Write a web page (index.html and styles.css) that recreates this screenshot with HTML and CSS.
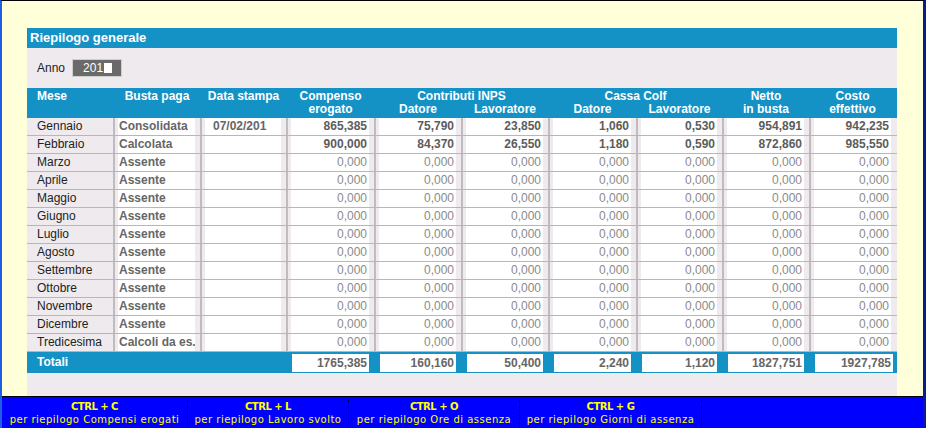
FILE: index.html
```html
<!DOCTYPE html>
<html lang="it">
<head>
<meta charset="utf-8">
<title>Riepilogo generale</title>
<link rel="stylesheet" href="styles.css">
</head>
<body>
<div class="window">
  <div class="desk">
    <section class="panel">
      <div class="title">Riepilogo generale</div>
      <div class="anno">
        <span class="anno-label">Anno</span>
        <span class="field">201<span class="caret"></span></span>
      </div>

      <div class="grid head">
        <div class="h h-left c1">Mese</div>
        <div class="h c2">Busta paga</div>
        <div class="h c3">Data stampa</div>
        <div class="h c4">Compenso</div>
        <div class="h c4 r2">erogato</div>
        <div class="h c56">Contributi INPS</div>
        <div class="h c5 r2">Datore</div>
        <div class="h c6 r2">Lavoratore</div>
        <div class="h c78">Cassa Colf</div>
        <div class="h c7 r2">Datore</div>
        <div class="h c8 r2">Lavoratore</div>
        <div class="h c9">Netto</div>
        <div class="h c9 r2">in busta</div>
        <div class="h c10">Costo</div>
        <div class="h c10 r2">effettivo</div>
      </div>

      <div class="grid row">
        <div class="cell mese">Gennaio</div>
        <div class="cell"><div class="box txt">Consolidata</div></div>
        <div class="cell"><div class="box date">07/02/201</div></div>
        <div class="cell"><div class="box num">865,385</div></div>
        <div class="cell"><div class="box num">75,790</div></div>
        <div class="cell"><div class="box num">23,850</div></div>
        <div class="cell"><div class="box num">1,060</div></div>
        <div class="cell"><div class="box num">0,530</div></div>
        <div class="cell"><div class="box num">954,891</div></div>
        <div class="cell last"><div class="box num">942,235</div></div>
      </div>
      <div class="grid row">
        <div class="cell mese">Febbraio</div>
        <div class="cell"><div class="box txt">Calcolata</div></div>
        <div class="cell"><div class="box date"></div></div>
        <div class="cell"><div class="box num">900,000</div></div>
        <div class="cell"><div class="box num">84,370</div></div>
        <div class="cell"><div class="box num">26,550</div></div>
        <div class="cell"><div class="box num">1,180</div></div>
        <div class="cell"><div class="box num">0,590</div></div>
        <div class="cell"><div class="box num">872,860</div></div>
        <div class="cell last"><div class="box num">985,550</div></div>
      </div>
      <div class="grid row">
        <div class="cell mese">Marzo</div>
        <div class="cell"><div class="box txt">Assente</div></div>
        <div class="cell"><div class="box date"></div></div>
        <div class="cell"><div class="box num zero">0,000</div></div>
        <div class="cell"><div class="box num zero">0,000</div></div>
        <div class="cell"><div class="box num zero">0,000</div></div>
        <div class="cell"><div class="box num zero">0,000</div></div>
        <div class="cell"><div class="box num zero">0,000</div></div>
        <div class="cell"><div class="box num zero">0,000</div></div>
        <div class="cell last"><div class="box num zero">0,000</div></div>
      </div>
      <div class="grid row">
        <div class="cell mese">Aprile</div>
        <div class="cell"><div class="box txt">Assente</div></div>
        <div class="cell"><div class="box date"></div></div>
        <div class="cell"><div class="box num zero">0,000</div></div>
        <div class="cell"><div class="box num zero">0,000</div></div>
        <div class="cell"><div class="box num zero">0,000</div></div>
        <div class="cell"><div class="box num zero">0,000</div></div>
        <div class="cell"><div class="box num zero">0,000</div></div>
        <div class="cell"><div class="box num zero">0,000</div></div>
        <div class="cell last"><div class="box num zero">0,000</div></div>
      </div>
      <div class="grid row">
        <div class="cell mese">Maggio</div>
        <div class="cell"><div class="box txt">Assente</div></div>
        <div class="cell"><div class="box date"></div></div>
        <div class="cell"><div class="box num zero">0,000</div></div>
        <div class="cell"><div class="box num zero">0,000</div></div>
        <div class="cell"><div class="box num zero">0,000</div></div>
        <div class="cell"><div class="box num zero">0,000</div></div>
        <div class="cell"><div class="box num zero">0,000</div></div>
        <div class="cell"><div class="box num zero">0,000</div></div>
        <div class="cell last"><div class="box num zero">0,000</div></div>
      </div>
      <div class="grid row">
        <div class="cell mese">Giugno</div>
        <div class="cell"><div class="box txt">Assente</div></div>
        <div class="cell"><div class="box date"></div></div>
        <div class="cell"><div class="box num zero">0,000</div></div>
        <div class="cell"><div class="box num zero">0,000</div></div>
        <div class="cell"><div class="box num zero">0,000</div></div>
        <div class="cell"><div class="box num zero">0,000</div></div>
        <div class="cell"><div class="box num zero">0,000</div></div>
        <div class="cell"><div class="box num zero">0,000</div></div>
        <div class="cell last"><div class="box num zero">0,000</div></div>
      </div>
      <div class="grid row">
        <div class="cell mese">Luglio</div>
        <div class="cell"><div class="box txt">Assente</div></div>
        <div class="cell"><div class="box date"></div></div>
        <div class="cell"><div class="box num zero">0,000</div></div>
        <div class="cell"><div class="box num zero">0,000</div></div>
        <div class="cell"><div class="box num zero">0,000</div></div>
        <div class="cell"><div class="box num zero">0,000</div></div>
        <div class="cell"><div class="box num zero">0,000</div></div>
        <div class="cell"><div class="box num zero">0,000</div></div>
        <div class="cell last"><div class="box num zero">0,000</div></div>
      </div>
      <div class="grid row">
        <div class="cell mese">Agosto</div>
        <div class="cell"><div class="box txt">Assente</div></div>
        <div class="cell"><div class="box date"></div></div>
        <div class="cell"><div class="box num zero">0,000</div></div>
        <div class="cell"><div class="box num zero">0,000</div></div>
        <div class="cell"><div class="box num zero">0,000</div></div>
        <div class="cell"><div class="box num zero">0,000</div></div>
        <div class="cell"><div class="box num zero">0,000</div></div>
        <div class="cell"><div class="box num zero">0,000</div></div>
        <div class="cell last"><div class="box num zero">0,000</div></div>
      </div>
      <div class="grid row">
        <div class="cell mese">Settembre</div>
        <div class="cell"><div class="box txt">Assente</div></div>
        <div class="cell"><div class="box date"></div></div>
        <div class="cell"><div class="box num zero">0,000</div></div>
        <div class="cell"><div class="box num zero">0,000</div></div>
        <div class="cell"><div class="box num zero">0,000</div></div>
        <div class="cell"><div class="box num zero">0,000</div></div>
        <div class="cell"><div class="box num zero">0,000</div></div>
        <div class="cell"><div class="box num zero">0,000</div></div>
        <div class="cell last"><div class="box num zero">0,000</div></div>
      </div>
      <div class="grid row">
        <div class="cell mese">Ottobre</div>
        <div class="cell"><div class="box txt">Assente</div></div>
        <div class="cell"><div class="box date"></div></div>
        <div class="cell"><div class="box num zero">0,000</div></div>
        <div class="cell"><div class="box num zero">0,000</div></div>
        <div class="cell"><div class="box num zero">0,000</div></div>
        <div class="cell"><div class="box num zero">0,000</div></div>
        <div class="cell"><div class="box num zero">0,000</div></div>
        <div class="cell"><div class="box num zero">0,000</div></div>
        <div class="cell last"><div class="box num zero">0,000</div></div>
      </div>
      <div class="grid row">
        <div class="cell mese">Novembre</div>
        <div class="cell"><div class="box txt">Assente</div></div>
        <div class="cell"><div class="box date"></div></div>
        <div class="cell"><div class="box num zero">0,000</div></div>
        <div class="cell"><div class="box num zero">0,000</div></div>
        <div class="cell"><div class="box num zero">0,000</div></div>
        <div class="cell"><div class="box num zero">0,000</div></div>
        <div class="cell"><div class="box num zero">0,000</div></div>
        <div class="cell"><div class="box num zero">0,000</div></div>
        <div class="cell last"><div class="box num zero">0,000</div></div>
      </div>
      <div class="grid row">
        <div class="cell mese">Dicembre</div>
        <div class="cell"><div class="box txt">Assente</div></div>
        <div class="cell"><div class="box date"></div></div>
        <div class="cell"><div class="box num zero">0,000</div></div>
        <div class="cell"><div class="box num zero">0,000</div></div>
        <div class="cell"><div class="box num zero">0,000</div></div>
        <div class="cell"><div class="box num zero">0,000</div></div>
        <div class="cell"><div class="box num zero">0,000</div></div>
        <div class="cell"><div class="box num zero">0,000</div></div>
        <div class="cell last"><div class="box num zero">0,000</div></div>
      </div>
      <div class="grid row">
        <div class="cell mese">Tredicesima</div>
        <div class="cell"><div class="box txt">Calcoli da es.</div></div>
        <div class="cell"><div class="box date"></div></div>
        <div class="cell"><div class="box num zero">0,000</div></div>
        <div class="cell"><div class="box num zero">0,000</div></div>
        <div class="cell"><div class="box num zero">0,000</div></div>
        <div class="cell"><div class="box num zero">0,000</div></div>
        <div class="cell"><div class="box num zero">0,000</div></div>
        <div class="cell"><div class="box num zero">0,000</div></div>
        <div class="cell last"><div class="box num zero">0,000</div></div>
      </div>

      <div class="grid totals">
        <div class="tot-label">Totali</div>
        <div class="tcell"><div class="tbox">1765,385</div></div>
        <div class="tcell"><div class="tbox">160,160</div></div>
        <div class="tcell"><div class="tbox">50,400</div></div>
        <div class="tcell"><div class="tbox">2,240</div></div>
        <div class="tcell"><div class="tbox">1,120</div></div>
        <div class="tcell"><div class="tbox">1827,751</div></div>
        <div class="tcell tlast"><div class="tbox">1927,785</div></div>
      </div>
    </section>
  </div>

  <footer class="keys">
    <div class="key k1"><b>CTRL + C</b><span>per riepilogo Compensi erogati</span></div>
    <div class="key k2"><b>CTRL + L</b><span>per riepilogo Lavoro svolto</span></div>
    <div class="key k3"><b>CTRL + O</b><span>per riepilogo Ore di assenza</span></div>
    <div class="key k4"><b>CTRL + G</b><span>per riepilogo Giorni di assenza</span></div>
  </footer>
</div>
</body>
</html>
```

FILE: styles.css
```css
* { box-sizing: border-box; }

html, body {
  margin: 0;
  padding: 0;
  background: #ffffda;
}

body {
  font-family: "Liberation Sans", Arial, sans-serif;
  font-size: 12px;
  color: #222;
}

.window {
  width: 926px;
  height: 428px;
  display: flex;
  flex-direction: column;
  border-top: 1px solid #000;
  border-left: 2px solid #1d5fe4;
  border-right: 3px solid #0b1d8e;
  overflow: hidden;
}

.desk {
  flex: 1;
  display: flex;
  background: #ffffda;
  padding: 27px 0 0 25px;
}

.panel {
  width: 870px;
  background: #eeeaee;
  display: flex;
  flex-direction: column;
}

.title {
  height: 20px;
  line-height: 20px;
  background: #1492c6;
  color: #fff;
  font-weight: bold;
  font-size: 13px;
  padding-left: 3px;
}

.anno {
  height: 40px;
  display: flex;
  align-items: center;
  padding-left: 10px;
  gap: 7px;
  color: #222;
}

.field {
  width: 50px;
  height: 18px;
  border: 1px solid #cfcfcf;
  background: #6a6a6a;
  color: #fff;
  line-height: 16px;
  padding-left: 10px;
  display: flex;
  align-items: center;
}

.caret {
  display: inline-block;
  width: 8px;
  height: 10px;
  background: #fff;
  margin-left: 1px;
}

.grid {
  display: grid;
  grid-template-columns: 88px 87px 86px 88px 87px 87px 88px 86px 87px 86px;
}

/* header */
.head {
  height: 30px;
  background: #1492c6;
  padding-top: 2px;
  grid-template-rows: 13px 13px;
}

.h {
  color: #fff;
  font-weight: bold;
  line-height: 13px;
  text-align: center;
  padding-right: 3px;
  white-space: nowrap;
  grid-row: 1;
}

.h-left { text-align: left; padding-left: 10px; }
.r2 { grid-row: 2; }
.c1 { grid-column: 1; }
.c2 { grid-column: 2; }
.c3 { grid-column: 3; }
.c4 { grid-column: 4; }
.c5 { grid-column: 5; }
.c6 { grid-column: 6; }
.c56 { grid-column: 5 / span 2; }
.c7 { grid-column: 7; }
.c8 { grid-column: 8; }
.c78 { grid-column: 7 / span 2; }
.c9 { grid-column: 9; }
.c10 { grid-column: 10; }

/* body rows */
.row {
  height: 18px;
  border-bottom: 1px solid #b9b5b9;
}

.cell {
  border-right: 2px solid #bfbbbf;
  padding: 0 5px 0 3px;
  height: 17px;
}

.cell.last {
  border-right: none;
  padding-right: 6px;
}

.mese {
  padding-left: 10px;
  line-height: 17px;
  color: #222;
  white-space: nowrap;
}

.box {
  background: #fff;
  height: 17px;
  line-height: 17px;
  white-space: nowrap;
  overflow: hidden;
}

.txt {
  font-weight: bold;
  color: #666;
  padding-left: 1px;
}

.date {
  font-weight: bold;
  color: #666;
  padding-left: 8px;
}

.num {
  text-align: right;
  padding-right: 2px;
  font-weight: bold;
  color: #5c5c5c;
}

.num.zero {
  font-weight: normal;
  color: #8a8a8a;
}

/* totals */
.totals {
  height: 21px;
  background: #1492c6;
}

.tot-label {
  grid-column: 1 / span 3;
  color: #fff;
  font-weight: bold;
  line-height: 21px;
  padding-left: 10px;
}

.tcell {
  padding: 2px 7px 1px 4px;
}

.tcell.tlast {
  padding-right: 4px;
}

.tbox {
  background: #fff;
  height: 18px;
  line-height: 18px;
  text-align: right;
  padding-right: 2px;
  font-weight: bold;
  color: #666;
}

/* footer */
.keys {
  height: 32px;
  background: #0000ff;
  border-top: 1px solid #000;
  display: flex;
  color: #ffff00;
}

.key {
  display: flex;
  flex-direction: column;
  align-items: center;
  border-right: 1px dotted #000;
  margin: 3px 0 2px;
  padding-top: 1px;
}

.k1 { width: 186px; }
.k2 { width: 161px; }
.k3 { width: 171px; }
.k4 { width: 182px; }

.key b {
  font-family: "DejaVu Sans", sans-serif;
  font-size: 10px;
  font-weight: bold;
  letter-spacing: -0.5px;
  line-height: 12px;
}

.key span {
  font-family: "DejaVu Sans", sans-serif;
  font-size: 10px;
  letter-spacing: 0.5px;
  line-height: 13px;
  white-space: nowrap;
}
```
